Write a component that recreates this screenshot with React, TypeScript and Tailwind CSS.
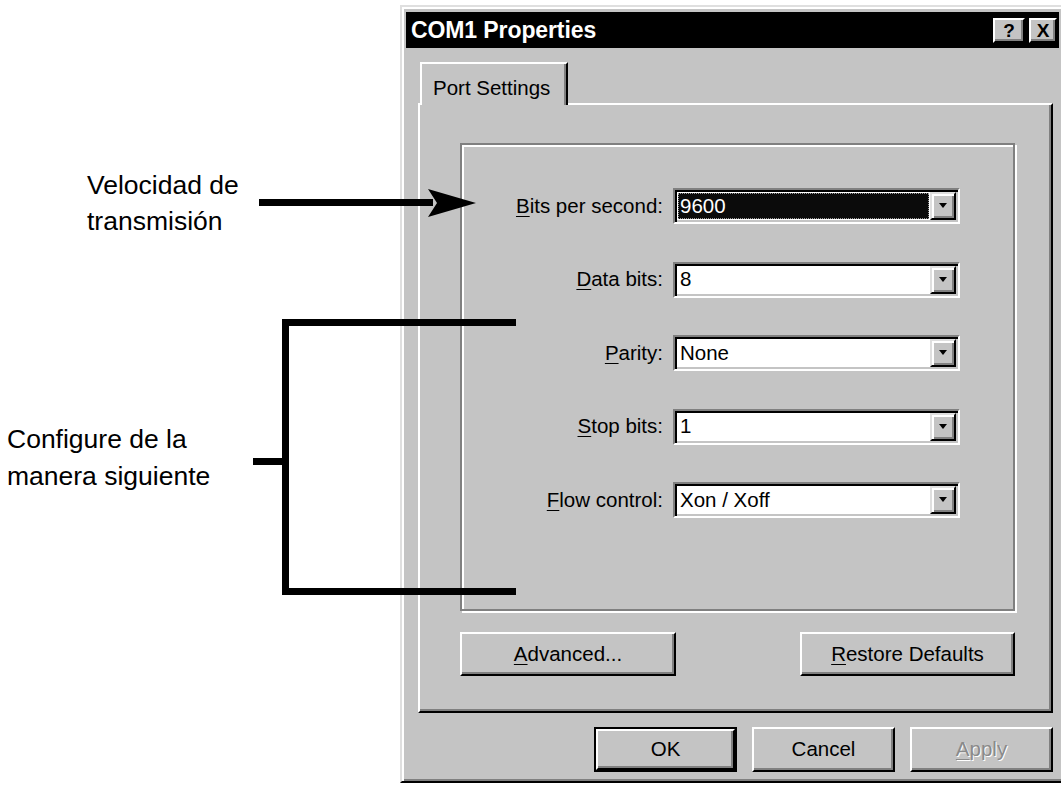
import React from 'react';

const raised =
  'border-2 border-t-white border-l-white border-b-black border-r-black shadow-[inset_-2px_-2px_0_#808080]';

function Key({ children }: { children: React.ReactNode }) {
  return <span className="underline underline-offset-[3px] decoration-1">{children}</span>;
}

function Combo({ value, selected }: { value: string; selected?: boolean }) {
  return (
    <div className="h-[36px] w-[287px] flex border-2 border-t-[#808080] border-l-[#808080] border-b-white border-r-white bg-white p-[2px] shadow-[inset_2px_2px_0_#000,inset_-2px_-2px_0_#c4c4c4]">
      <div className="flex-1 flex items-center pl-[1px] pr-[1px]">
        {selected ? (
          <div className="w-full h-[26px] flex items-center bg-[#0b0b0b] text-white border border-dotted border-[#9a9a9a] pl-[1px]">
            {value}
          </div>
        ) : (
          <span className="pl-[2px]">{value}</span>
        )}
      </div>
      <div className="w-[26px] h-full flex items-center justify-center bg-[#c4c4c4] border-2 border-t-[#dfdfdf] border-l-[#dfdfdf] border-b-black border-r-black shadow-[inset_2px_2px_0_#fff,inset_-2px_-2px_0_#808080]">
        <svg width="10" height="6" viewBox="0 0 10 6">
          <polygon points="1,0 9,0 5,5" fill="#000" />
        </svg>
      </div>
    </div>
  );
}

const rows: { label: React.ReactNode; value: string; selected?: boolean }[] = [
  { label: <><Key>B</Key>its per second:</>, value: '9600', selected: true },
  { label: <><Key>D</Key>ata bits:</>, value: '8' },
  { label: <><Key>P</Key>arity:</>, value: 'None' },
  { label: <><Key>S</Key>top bits:</>, value: '1' },
  { label: <><Key>F</Key>low control:</>, value: 'Xon / Xoff' },
];

export default function App() {
  return (
    <div className="relative w-[1061px] h-[787px] overflow-hidden bg-white flex text-black font-['Liberation_Sans',Arial,sans-serif]">
      {/* notas a la izquierda */}
      <div className="w-[400px] shrink-0 flex flex-col items-start text-[26.5px] leading-[36px]">
        <div className="mt-[167px] ml-[87px]">
          <div>Velocidad de</div>
          <div>transmisión</div>
        </div>
        <div className="mt-[182px] ml-[7px] leading-[37px]">
          <div>Configure de la</div>
          <div>manera siguiente</div>
        </div>
      </div>

      {/* ventana */}
      <div className="mt-[5px] w-[665px] h-[778px] shrink-0 bg-[#c4c4c4] border-2 border-t-[#dfdfdf] border-l-[#dfdfdf] border-b-black border-r-black shadow-[inset_2px_2px_0_#fff,inset_-2px_-2px_0_#808080] pt-[5px] px-[4px] text-[20.5px]">
        <div className="h-[36px] bg-black flex items-center justify-between pl-[5px] pr-[2px]">
          <span className="text-white font-bold text-[23px] tracking-[-0.1px]">COM1 Properties</span>
          <div className="flex gap-[4px] items-center">
            <div className={`w-[32px] h-[25px] bg-[#c4c4c4] flex items-center justify-center font-bold text-[19px] leading-none ${raised}`}>?</div>
            <div className={`w-[28px] h-[25px] bg-[#c4c4c4] flex items-center justify-center font-bold text-[19px] leading-none ${raised}`}>X</div>
          </div>
        </div>

        <div className="pl-[12px] pr-[6px] pt-[14px]">
          {/* pestaña */}
          <div className="relative z-10 ml-[2px] -mb-[2px] w-[148px] h-[43px] bg-[#c4c4c4] border-t-2 border-l-2 border-r-2 border-t-white border-l-white border-r-black shadow-[inset_-2px_0_0_#808080] pl-[11px] pt-[9px]">
            Port Settings
          </div>

          {/* hoja */}
          <div className="w-[635px] h-[610px] border-2 border-t-white border-l-white border-b-black border-r-black shadow-[inset_-2px_-2px_0_#808080] pt-[38px] pl-[40px]">
            <div className="w-[555px] h-[468px] border-2 border-[#808080] shadow-[inset_2px_2px_0_#fff,2px_2px_0_#fff] pt-[43px] flex flex-col gap-[37.5px]">
              {rows.map((r, i) => (
                <div key={i} className="flex items-center">
                  <div className="w-[201px] text-right">{r.label}</div>
                  <div className="ml-[10px]">
                    <Combo value={r.value} selected={r.selected} />
                  </div>
                </div>
              ))}
            </div>
            <div className="w-[555px] mt-[21px] flex justify-between">
              <div className={`w-[216px] h-[44px] flex items-center justify-center ${raised}`}>
                <span><Key>A</Key>dvanced...</span>
              </div>
              <div className={`w-[215px] h-[44px] flex items-center justify-center ${raised}`}>
                <span><Key>R</Key>estore Defaults</span>
              </div>
            </div>
          </div>

          {/* botones */}
          <div className="w-[635px] mt-[14px] flex justify-end gap-[15px]">
            <div className="w-[143px] h-[45px] border-2 border-black">
              <div className={`w-full h-full flex items-center justify-center ${raised}`}>OK</div>
            </div>
            <div className={`w-[143px] h-[45px] flex items-center justify-center ${raised}`}>Cancel</div>
            <div className={`w-[143px] h-[45px] flex items-center justify-center text-[#8a8a8a] [text-shadow:1px_1px_0_#fff] ${raised}`}>
              <span><Key>A</Key>pply</span>
            </div>
          </div>
        </div>
      </div>

      {/* flechas y corchete */}
      <svg className="absolute inset-0 pointer-events-none" width="1061" height="787" viewBox="0 0 1061 787">
        <rect x="259" y="199" width="174" height="7" fill="#000" />
        <polygon points="428,189 476,203 428,217 437,203" fill="#000" />
        <path d="M516 322.5 H285.5 V591.5 H516" fill="none" stroke="#000" strokeWidth="7" strokeLinejoin="miter" />
        <path d="M253 461.5 H285.5" fill="none" stroke="#000" strokeWidth="7" />
      </svg>
    </div>
  );
}
